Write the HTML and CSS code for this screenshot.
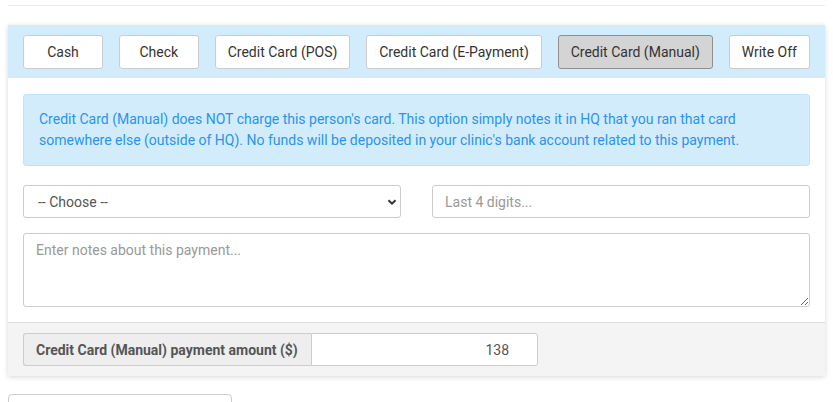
FILE: index.html
```html
<!DOCTYPE html>
<html>
<head>
<meta charset="utf-8">
<link rel="stylesheet" href="styles.css">
</head>
<body>
<div class="rule"></div>
<div class="card">
  <div class="card-head">
    <button class="btn">Cash</button>
    <button class="btn">Check</button>
    <button class="btn">Credit Card (POS)</button>
    <button class="btn">Credit Card (E-Payment)</button>
    <button class="btn active">Credit Card (Manual)</button>
    <button class="btn">Write Off</button>
  </div>
  <div class="card-body">
    <div class="alert">Credit Card (Manual) does NOT charge this person's card. This option simply notes it in HQ that you ran that card somewhere else (outside of HQ). No funds will be deposited in your clinic's bank account related to this payment.</div>
    <div class="row">
      <div class="select-wrap">
        <select class="control select"><option>-- Choose --</option></select>
        <svg class="chev" width="10" height="8" viewBox="0 0 10 8"><path d="M1.5 2.2 L5 5.7 L8.5 2.2" fill="none" stroke="#333" stroke-width="2"/></svg>
      </div>
      <input class="control" placeholder="Last 4 digits...">
    </div>
    <textarea class="control notes" placeholder="Enter notes about this payment..."></textarea>
  </div>
  <div class="card-foot">
    <div class="group">
      <span class="group-label">Credit Card (Manual) payment amount ($)</span>
      <input class="group-input" value="138">
    </div>
  </div>
</div>
<div class="below"></div>
</body>
</html>
```
FILE: styles.css
```css
html, body { margin: 0; padding: 0; background: #fff; }
body {
  padding: 5px 8px 0;
  font-family: Roboto, "Liberation Sans", Arial, sans-serif;
  font-size: 14px;
  color: #333;
  overflow: hidden;
  height: 402px;
  box-sizing: border-box;
}
.rule { height: 1px; background: #e8eaec; }
.card {
  margin-top: 19px;
  width: 817px;
  background: #fff;
  box-shadow: 0 1px 5px rgba(0,0,0,0.16);
}
.card-head {
  background: #d2ecfb;
  padding: 10px 15px 9px;
  display: flex;
  justify-content: space-between;
}
.btn {
  height: 34px;
  min-width: 80px;
  padding: 0 12px;
  border: 1px solid #ccc;
  border-radius: 3px;
  background: #fff;
  color: #333;
  font-family: inherit;
  font-size: 14px;
}
.btn.active {
  background: #d4d4d4;
  border-color: #8f8f8f;
}
.card-body { padding: 16px 15px 15px; }
.alert {
  background: #d2ecfb;
  border: 1px solid #bfe5fb;
  border-radius: 3px;
  color: #2a94ef;
  padding: 14px 15px;
  line-height: 21px;
}
.row {
  margin-top: 19px;
  display: grid;
  grid-template-columns: 1fr 1fr;
  gap: 31px;
  height: 33px;
}
.select-wrap { position: relative; min-width: 0; }
.control {
  display: block;
  box-sizing: border-box;
  height: 33px;
  width: 100%;
  min-width: 0;
  margin: 0;
  border: 1px solid #ccc;
  border-radius: 3px;
  background: #fff;
  font-family: inherit;
  font-size: 14px;
  color: #555;
  padding: 0 12px;
  outline: none;
}
.control::placeholder { color: #999; }
.select { appearance: none; -webkit-appearance: none; color: #555; padding-left: 14px; }
.chev { position: absolute; right: 4px; top: 13px; pointer-events: none; }
.notes {
  margin-top: 15px;
  height: 74px;
  padding: 8px 12px;
  resize: vertical;
}
.card-foot {
  background: #f4f4f4;
  border-top: 1px solid #dedede;
  padding: 10px 15px 10px;
}
.group { display: flex; width: 515px; height: 33px; }
.group-label {
  box-sizing: border-box;
  width: 288px;
  background: #eee;
  border: 1px solid #ccc;
  border-right: none;
  border-radius: 3px 0 0 3px;
  font-weight: bold;
  color: #555;
  display: flex;
  align-items: center;
  padding: 0 12px;
}
.group-input {
  box-sizing: border-box;
  flex: 1;
  height: 33px;
  border: 1px solid #ccc;
  border-radius: 0 3px 3px 0;
  background: #fff;
  text-align: right;
  padding: 0 28px 0 12px;
  font-family: inherit;
  font-size: 14px;
  color: #555;
  outline: none;
}
.below {
  margin-top: 18px;
  width: 222px;
  height: 30px;
  border: 1px solid #ccc;
  border-radius: 4px;
}
```
